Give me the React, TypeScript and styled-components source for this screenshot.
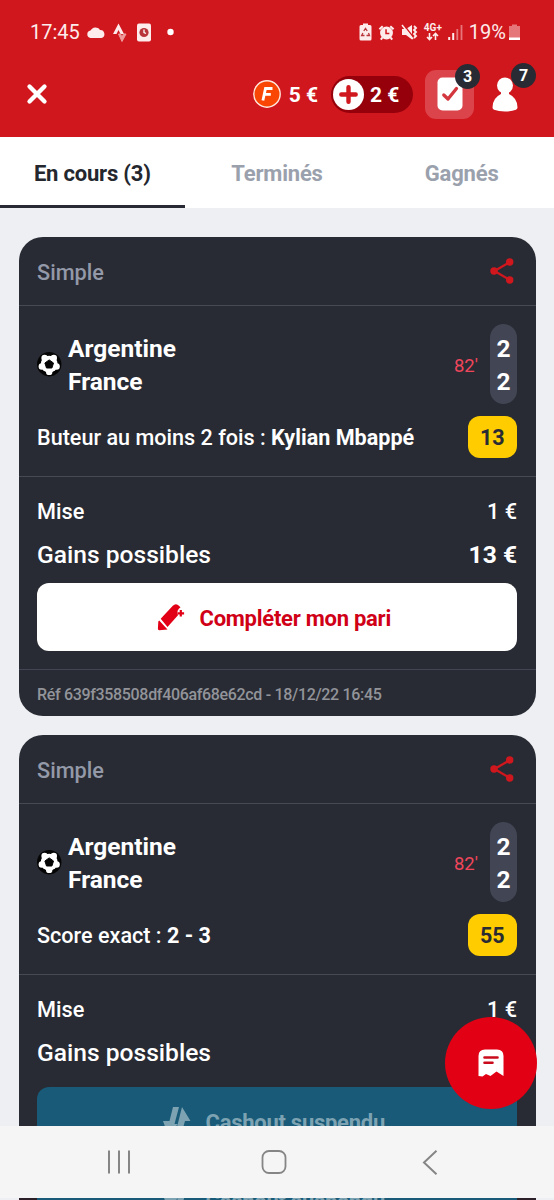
import React from "react";
import styled, { createGlobalStyle } from "styled-components";

const Global = createGlobalStyle`
  *, *::before, *::after { box-sizing: border-box; }
  html, body { margin: 0; padding: 0; }
  body { font-family: Roboto, "Liberation Sans", sans-serif; background: #edeff3; overflow: hidden; }
`;

const Screen = styled.div`
  width: 554px;
  height: 1200px;
  display: flex;
  flex-direction: column;
  overflow: hidden;
  background: #edeff3;
  position: relative;
`;

const Header = styled.header`
  flex: none;
  height: 137px;
  background: #d0171e;
  color: #fff;
`;

const StatusBar = styled.div`
  height: 64px;
  padding: 0 33px 0 30px;
  display: flex;
  justify-content: space-between;
  align-items: center;
  font-size: 20px;
  color: #fdeceb;
  svg { display: block; }
`;

const StatusGroup = styled.div<{ $gap: number }>`
  display: flex;
  align-items: center;
  gap: ${(p) => p.$gap}px;
`;

const Network = styled.div`
  width: 18px;
  display: flex;
  flex-direction: column;
  align-items: center;
  font-size: 10px;
  line-height: 9px;
  font-weight: 700;
`;

const Toolbar = styled.div`
  height: 60px;
  padding: 0 36px 0 26px;
  display: flex;
  align-items: center;
  svg { display: block; }
`;

const Balance = styled.div`
  margin-left: auto;
  display: flex;
  align-items: center;
  gap: 8px;
  font-size: 21px;
  font-weight: 700;
`;

const BalanceText = styled.span`
  position: relative;
  top: 1px;
`;

const DepositPill = styled.button`
  margin: 0 0 0 13px;
  width: 82px;
  height: 37px;
  padding: 0 0 0 2px;
  border: 0;
  border-radius: 19px;
  background: #95000b;
  color: #fff;
  display: flex;
  align-items: center;
  gap: 6px;
  font: 700 21px Roboto, sans-serif;
  white-space: nowrap;
`;

const BetsButton = styled.div`
  position: relative;
  margin-left: 12px;
  width: 49px;
  height: 49px;
  border-radius: 11px;
  background: #dc444b;
  display: flex;
  align-items: center;
  justify-content: center;
`;

const Profile = styled.div`
  position: relative;
  margin-left: 18px;
  width: 26px;
  height: 35px;
`;

const CountBadge = styled.span<{ $top: number; $right: number }>`
  position: absolute;
  top: ${(p) => p.$top}px;
  right: ${(p) => p.$right}px;
  width: 25px;
  height: 25px;
  border-radius: 50%;
  background: #282b33;
  color: #fff;
  font-size: 16px;
  font-weight: 700;
  line-height: 26px;
  text-align: center;
`;

const Tabs = styled.nav`
  flex: none;
  height: 71px;
  display: grid;
  grid-template-columns: repeat(3, 1fr);
  background: #fff;
`;

const Tab = styled.div<{ $active?: boolean }>`
  display: flex;
  align-items: center;
  justify-content: center;
  padding-top: 4px;
  font-size: 22px;
  font-weight: 700;
  letter-spacing: -0.2px;
  color: ${(p) => (p.$active ? "#24272e" : "#9aa1ad")};
  border-bottom: 3px solid ${(p) => (p.$active ? "#282b33" : "transparent")};
`;

const BetList = styled.main`
  flex: none;
  height: 918px;
  overflow: hidden;
  padding: 29px 18.5px 0;
  display: flex;
  flex-direction: column;
  gap: 19px;
`;

const Card = styled.article`
  flex: none;
  border-radius: 24px;
  background: #282b33;
  color: #fff;
  overflow: hidden;
`;

const CardHead = styled.div`
  height: 69px;
  padding: 2px 21.5px 0 18.5px;
  display: flex;
  align-items: center;
  justify-content: space-between;
  font-size: 21.7px;
  font-weight: 500;
  color: #9399a8;
  border-bottom: 1.5px solid #464a54;
  svg { margin-top: -2px; }
`;

const Match = styled.div`
  height: 171px;
  padding: 18px 18.5px 0;
  border-bottom: 1.5px solid #464a54;
`;

const Teams = styled.div`
  height: 80px;
  display: flex;
  align-items: center;
`;

const TeamNames = styled.div`
  margin-left: 6px;
  padding-top: 2px;
  flex: 1;
  font-size: 24.5px;
  font-weight: 700;
  line-height: 33.3px;
`;

const Minute = styled.span`
  margin-right: 12px;
  padding-top: 3px;
  font-size: 18.5px;
  color: #f0465c;
`;

const Scores = styled.div`
  width: 27px;
  height: 80px;
  border-radius: 13.5px;
  background: #424654;
  padding-top: 8px;
  text-align: center;
  font-size: 24.5px;
  font-weight: 700;
  line-height: 33.3px;
`;

const Pick = styled.div`
  margin-top: 12px;
  height: 42px;
  display: flex;
  align-items: center;
  justify-content: space-between;
  font-size: 21.6px;
  font-weight: 500;
  white-space: pre;
`;

const Odds = styled.span`
  width: 49.5px;
  height: 42px;
  border-radius: 12px;
  background: #ffcc00;
  color: #282b33;
  font-size: 21.5px;
  font-weight: 700;
  line-height: 43px;
  text-align: center;
`;

const Summary = styled.div`
  padding: 17px 18.5px 18px;
`;

const Amount = styled.div<{ $large?: boolean }>`
  height: ${(p) => (p.$large ? 53 : 34)}px;
  display: flex;
  align-items: center;
  justify-content: space-between;
  font-size: ${(p) => (p.$large ? 24.6 : 21.7)}px;
  font-weight: 500;
`;

const Action = styled.button<{ $suspended?: boolean }>`
  width: 100%;
  height: 68px;
  padding: 2px 6px 0 0;
  border: 0;
  border-radius: 12px;
  margin-top: ${(p) => (p.$suspended ? 8 : 2)}px;
  display: flex;
  align-items: center;
  justify-content: center;
  gap: 14.5px;
  background: ${(p) => (p.$suspended ? "#185a77" : "#fff")};
  color: ${(p) => (p.$suspended ? "#7da3b3" : "#d00016")};
  font: 700 22px Roboto, sans-serif;
  letter-spacing: -0.26px;
  svg { margin-top: -3px; }
`;

const Reference = styled.div`
  height: 47px;
  padding: 2px 18.5px 0;
  border-top: 1.5px solid #424654;
  display: flex;
  align-items: center;
  font-size: 16px;
  font-weight: 500;
  letter-spacing: -0.33px;
  color: #92949a;
`;

const TicketButton = styled.button`
  position: absolute;
  left: 444.5px;
  top: 1016.5px;
  width: 92.5px;
  height: 92.5px;
  padding: 0;
  border: 0;
  border-radius: 50%;
  background: #e20014;
  display: flex;
  align-items: center;
  justify-content: center;
`;

const NavBar = styled.div`
  flex: none;
  height: 72px;
  background: #f5f5f5;
  padding: 0 116px 0 107px;
  display: flex;
  align-items: center;
  gap: 130px;
`;

const BackIcon = styled.svg`
  margin-left: 5px;
`;

const BottomSliver = styled.div`
  flex: none;
  height: 2px;
  overflow: hidden;
  padding: 0 18.5px;
`;

const SliverCard = styled.div`
  height: 2px;
  padding: 0 18.5px;
  background: #2b2028;
`;

const SliverButton = styled.div`
  height: 2px;
  overflow: hidden;
  display: flex;
  align-items: flex-start;
  justify-content: center;
  gap: 14.5px;
  padding-right: 6px;
  background: #185a77;
  color: #7da3b3;
  font-size: 22px;
  font-weight: 700;
  letter-spacing: -0.26px;
  line-height: 26px;
  svg { flex: none; margin-top: -18px; }
  span { margin-top: -9px; }
`;

const ShareIcon = () => (
  <svg width="24" height="28" viewBox="0 0 24 28" fill="#d0171e">
    <path d="M20 5 4.5 14 20 23" fill="none" stroke="#d0171e" strokeWidth="2.3" />
    <circle cx="19.700" cy="5" r="3.700" />
    <circle cx="4" cy="14" r="3.700" />
    <circle cx="19.700" cy="23" r="3.700" />
  </svg>
);

const BallIcon = () => (
  <svg width="25" height="25" viewBox="0 0 25 25">
    <circle cx="12.200" cy="12.200" r="12.200" fill="#050505" />
    <g fill="#fff">
      <circle cx="12.200" cy="12.200" r="8.500" />
      <circle cx="12.200" cy="19.900" r="3.200" />
      <circle cx="19.600" cy="14.500" r="3.200" />
      <circle cx="16.800" cy="6" r="3.200" />
      <circle cx="7.600" cy="6" r="3.200" />
      <circle cx="4.800" cy="14.500" r="3.200" />
    </g>
    <path d="m12.200 7.900 4.300 3.100-1.600 5H9.500l-1.600-5Z" fill="#050505" stroke="#050505" strokeLinejoin="round" />
  </svg>
);

const PencilIcon = () => (
  <svg width="28" height="28" viewBox="0 0 28 28" fill="#e20017">
    <path d="M3.700 15.700 15.800 2.700Q18.500 0 21 2L23.500 4.300Q19 7.500 21 12.300L10.500 24Z" />
    <path d="M2.200 17.500 10.500 26.500 2.300 27.200Q.8 27.300.9 25.600L1.300 18.500Z" />
    <path d="M23.800 7v6.600M20.500 10.300h6.600" stroke="#e20017" strokeWidth="2.200" />
  </svg>
);

const CashoutIcon = () => (
  <svg width="28" height="30" viewBox="0 0 28 30" fill="#7da3b3">
    <path d="M10 1h6L11.500 18H15L5 29 0 15H6.500Z" />
    <path d="M19 1 27.500 15H22L18 29h-6Z" />
  </svg>
);

const sport = { home: "Argentine", away: "France", minute: "82'", scores: [2, 2] };

type BetProps = { label: string; pick: string; odds: number; gain?: string; reference?: string; suspended?: boolean };

const Bet = ({ label, pick, odds, gain, reference, suspended }: BetProps) => (
  <Card>
    <CardHead>Simple<ShareIcon /></CardHead>
    <Match>
      <Teams>
        <BallIcon />
        <TeamNames><div>{sport.home}</div><div>{sport.away}</div></TeamNames>
        <Minute>{sport.minute}</Minute>
        <Scores><div>{sport.scores[0]}</div><div>{sport.scores[1]}</div></Scores>
      </Teams>
      <Pick><span>{label} : <b>{pick}</b></span><Odds>{odds}</Odds></Pick>
    </Match>
    <Summary>
      <Amount><span>Mise</span><span>1 €</span></Amount>
      <Amount $large><span>Gains possibles</span>{gain && <b>{gain}</b>}</Amount>
      <Action $suspended={suspended}>
        {suspended ? <CashoutIcon /> : <PencilIcon />}
        <span>{suspended ? "Cashout suspendu" : "Compléter mon pari"}</span>
      </Action>
    </Summary>
    {reference && <Reference>{reference}</Reference>}
  </Card>
);

export default function App() {
  return (
    <Screen>
      <Global />
      <Header>
        <StatusBar>
          <StatusGroup $gap={7}>
            <span>17:45</span>
            <svg width="19" height="13" viewBox="0 0 19 13" fill="currentColor"><path d="M3.500 12A3.800 3.800 0 0 1 3.500 4.500 5.500 5.500 0 0 1 13 4 4.100 4.100 0 0 1 14.500 12Z" /></svg>
            <svg width="14" height="19" viewBox="0 0 14 19"><path d="M0 11 5.500.5 11 11H7.500L5.500 7 3.500 11Z" fill="currentColor" /><path d="M5.500 11h2L9 14l1.500-3H13L9 18.500Z" fill="#ee9b9c" stroke="#ee9b9c" /></svg>
            <svg width="22" height="19" viewBox="0 0 22 19"><rect x="3" y=".5" width="14" height="18" rx="2" fill="currentColor" /><circle cx="10" cy="9.500" r="4.600" fill="#b9343a" /><path d="M10 6.500v3l2 1" fill="none" stroke="#fff" strokeWidth="1.300" /></svg>
            <svg width="18" height="8" viewBox="0 0 18 8"><circle cx="7.500" cy="4" r="3.200" fill="#fff" /></svg>
          </StatusGroup>
          <StatusGroup $gap={6}>
            <svg width="13" height="18" viewBox="0 0 13 18"><path d="M4 2V.5h5V2h2q1.500 0 1.500 1.500V16q0 1.500-1.500 1.500H2Q.5 17.500.5 16V3.500Q.5 2 2 2Z" fill="currentColor" /><path d="m4.800 8 1.700-2.500L8.200 8M9.500 10l1 2.500H7.500M5.500 12.500H2.600L3.900 10" fill="none" stroke="#b9343a" strokeWidth="1.300" /></svg>
            <svg width="17" height="17" viewBox="0 0 18 17"><circle cx="9" cy="9" r="6.800" fill="currentColor" /><path d="M1.500 5 5 1.800M16.500 5 13 1.800M4.500 14l-1.500 2M13.500 14l1.500 2" stroke="currentColor" strokeWidth="2.200" /><path d="M8.500 5v4.500H12" fill="none" stroke="#d0171e" strokeWidth="1.600" /></svg>
            <svg width="17" height="17" viewBox="0 0 17 17"><path d="M1 5h4l6-4v14.500l-6-4.500H1Z" fill="currentColor" /><path d="M2 0 13 14" stroke="#d0171e" strokeWidth="1.500" /><path d="M1 1 12 15" stroke="currentColor" strokeWidth="1.500" /><path d="m13 2 2 2-2 2 2 2-2 2 2 2-2 2" stroke="currentColor" strokeWidth="1.900" fill="none" /></svg>
            <Network>
              <span>4G+</span>
              <svg width="13" height="9" viewBox="0 0 13 9" fill="none" stroke="currentColor" strokeWidth="1.600"><path d="M3.500 1v6M1 5l2.500 2.500L6 5M9.500 8V2M7 4l2.500-2.500L12 4" /></svg>
            </Network>
            <svg width="15" height="16" viewBox="0 0 15 16"><path d="M1.200 16v-3M5.200 16V9" stroke="currentColor" strokeWidth="2" /><path d="M9.300 16V5M13.500 16V1" stroke="#e5777b" strokeWidth="1.800" /></svg>
            <StatusGroup $gap={2}>
              <span>19%</span>
              <svg width="13" height="17" viewBox="0 0 13 17"><path d="M4 2V.5h5V2h3v14H1V2Z" fill="#e5777b" /><path d="M1 13.500h11v2.500H1Z" fill="#fff" /></svg>
            </StatusGroup>
          </StatusGroup>
        </StatusBar>
        <Toolbar>
          <svg width="22" height="22" viewBox="0 0 22 22"><path d="m3.500 3.500 15 15m0-15-15 15" stroke="#fff" strokeWidth="4.300" strokeLinecap="round" /></svg>
          <Balance>
            <svg width="28" height="28" viewBox="0 0 28 28"><circle cx="14" cy="14" r="13.200" fill="#fa4605" stroke="#ffe9df" strokeWidth="1.400" /><path d="M19.500 8.500h-7L9.900 20.500M11.500 14.300h6.300" fill="none" stroke="#fff" strokeWidth="2.800" /></svg>
            <BalanceText>5 €</BalanceText>
          </Balance>
          <DepositPill>
            <svg width="31" height="31" viewBox="0 0 31 31"><circle cx="15.500" cy="15.500" r="15.500" fill="#fff" /><path d="M15.500 8.300v14.400M8.300 15.500h14.400" stroke="#d0171e" strokeWidth="4.400" strokeLinecap="round" /></svg>
            <BalanceText>2 €</BalanceText>
          </DepositPill>
          <BetsButton>
            <svg width="26" height="34" viewBox="0 0 26 34"><rect x=".5" y=".5" width="25" height="33" rx="5" fill="#fff" /><path d="m6.800 18 4.200 4 8.500-10.500" fill="none" stroke="#d3363d" strokeWidth="3.300" strokeLinecap="round" strokeLinejoin="round" /></svg>
            <CountBadge $top={-6} $right={-6}>3</CountBadge>
          </BetsButton>
          <Profile>
            <svg width="26" height="35" viewBox="0 0 26 35" fill="#fff"><circle cx="13" cy="8.500" r="8" /><path d="M9 14h8v3q8.500 4 8.500 13.500 0 1.500-1.500 2.200-4.500 1.800-11 1.800T2 32.700Q.5 32 .5 30.500.5 21 9 17Z" /></svg>
            <CountBadge $top={-14} $right={-18}>7</CountBadge>
          </Profile>
        </Toolbar>
      </Header>
      <Tabs>
        <Tab $active>En cours (3)</Tab>
        <Tab>Terminés</Tab>
        <Tab>Gagnés</Tab>
      </Tabs>
      <BetList>
        <Bet label="Buteur au moins 2 fois" pick="Kylian Mbappé" odds={13} gain="13 €" reference="Réf 639f358508df406af68e62cd - 18/12/22 16:45" />
        <Bet label="Score exact" pick="2 - 3" odds={55} suspended />
      </BetList>
      <TicketButton>
        <svg width="26" height="28" viewBox="0 0 26 28"><path d="M.5 27V7Q.5.500 7 .5h12Q25.500.500 25.500 7V27L18.500 22.500 12.500 27 8 25 4.500 27.500Z" fill="#fff" /><path d="M6.500 8.500h13M6.500 13.800h8" stroke="#c90b1c" strokeWidth="2.600" strokeLinecap="round" /></svg>
      </TicketButton>
      <NavBar>
        <svg width="24" height="24" viewBox="0 0 24 24" stroke="#858585" strokeWidth="2"><path d="M2 .5v23M12 .5v23M22 .5v23" /></svg>
        <svg width="26" height="24" viewBox="0 0 26 24" fill="none" stroke="#858585" strokeWidth="1.800"><rect x="1.500" y="1" width="23" height="22" rx="6.500" /></svg>
        <BackIcon width="16" height="25" viewBox="0 0 16 25" fill="none" stroke="#858585" strokeWidth="2"><path d="M14.500.8 2 12.500l12.500 11.700" /></BackIcon>
      </NavBar>
      <BottomSliver><SliverCard><SliverButton><CashoutIcon /><span>Cashout suspendu</span></SliverButton></SliverCard></BottomSliver>
    </Screen>
  );
}
